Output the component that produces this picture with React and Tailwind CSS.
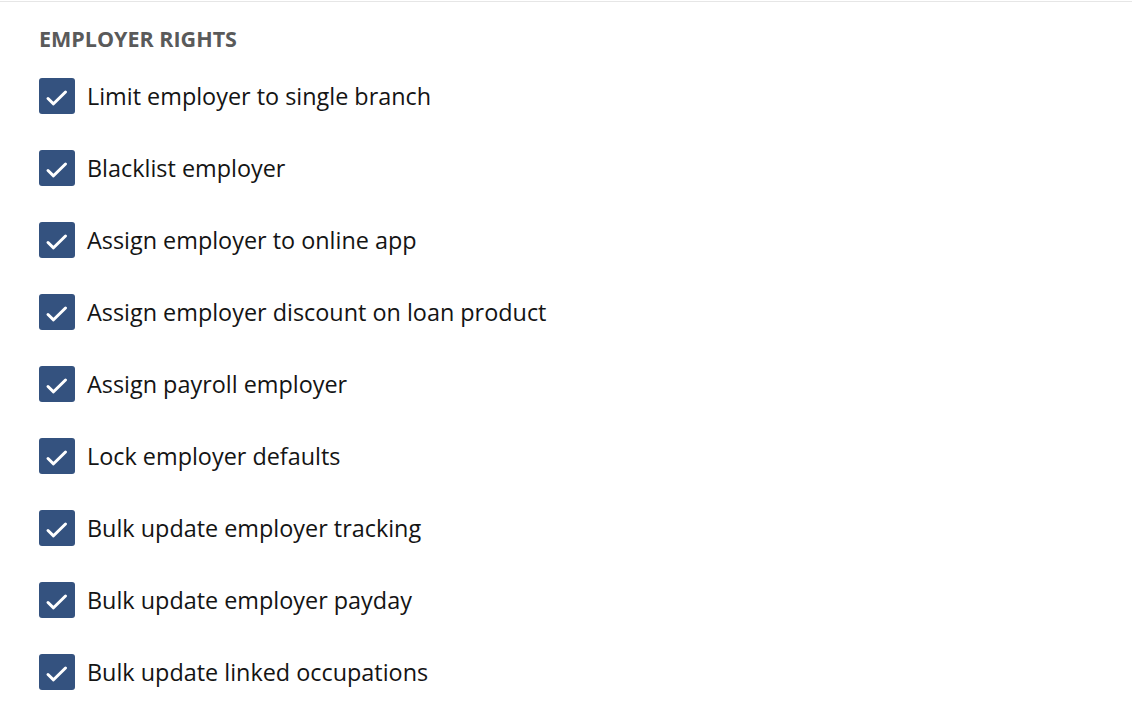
import React from 'react';

const RIGHTS = [
  'Limit employer to single branch',
  'Blacklist employer',
  'Assign employer to online app',
  'Assign employer discount on loan product',
  'Assign payroll employer',
  'Lock employer defaults',
  'Bulk update employer tracking',
  'Bulk update employer payday',
  'Bulk update linked occupations',
];

const CheckBox = () => (
  <span className="flex h-9 w-9 shrink-0 items-center justify-center rounded-[3px] bg-[#34527f]">
    <svg width="36" height="36" viewBox="0 0 36 36" fill="none">
      <polyline points="9,20.5 14.5,25.8 26.5,14" stroke="white" strokeWidth="3" strokeLinecap="round" strokeLinejoin="round" />
    </svg>
  </span>
);

export default function App() {
  return (
    <div className="min-h-[719px] w-full bg-white font-['Open_Sans',sans-serif]">
      <div className="mt-px border-t border-[#e6e6e6]" />
      <div className="px-[39px] pt-[23px]">
        <h2 className="text-[21.5px] font-bold leading-[28px] text-[#5a5a5a]">EMPLOYER RIGHTS</h2>
        <ul className="mt-[25px] flex flex-col gap-9">
          {RIGHTS.map((label) => (
            <li key={label} className="flex h-9 items-center gap-3">
              <CheckBox />
              <span className="text-[23.4px] leading-9 text-[#141414]">{label}</span>
            </li>
          ))}
        </ul>
      </div>
    </div>
  );
}
